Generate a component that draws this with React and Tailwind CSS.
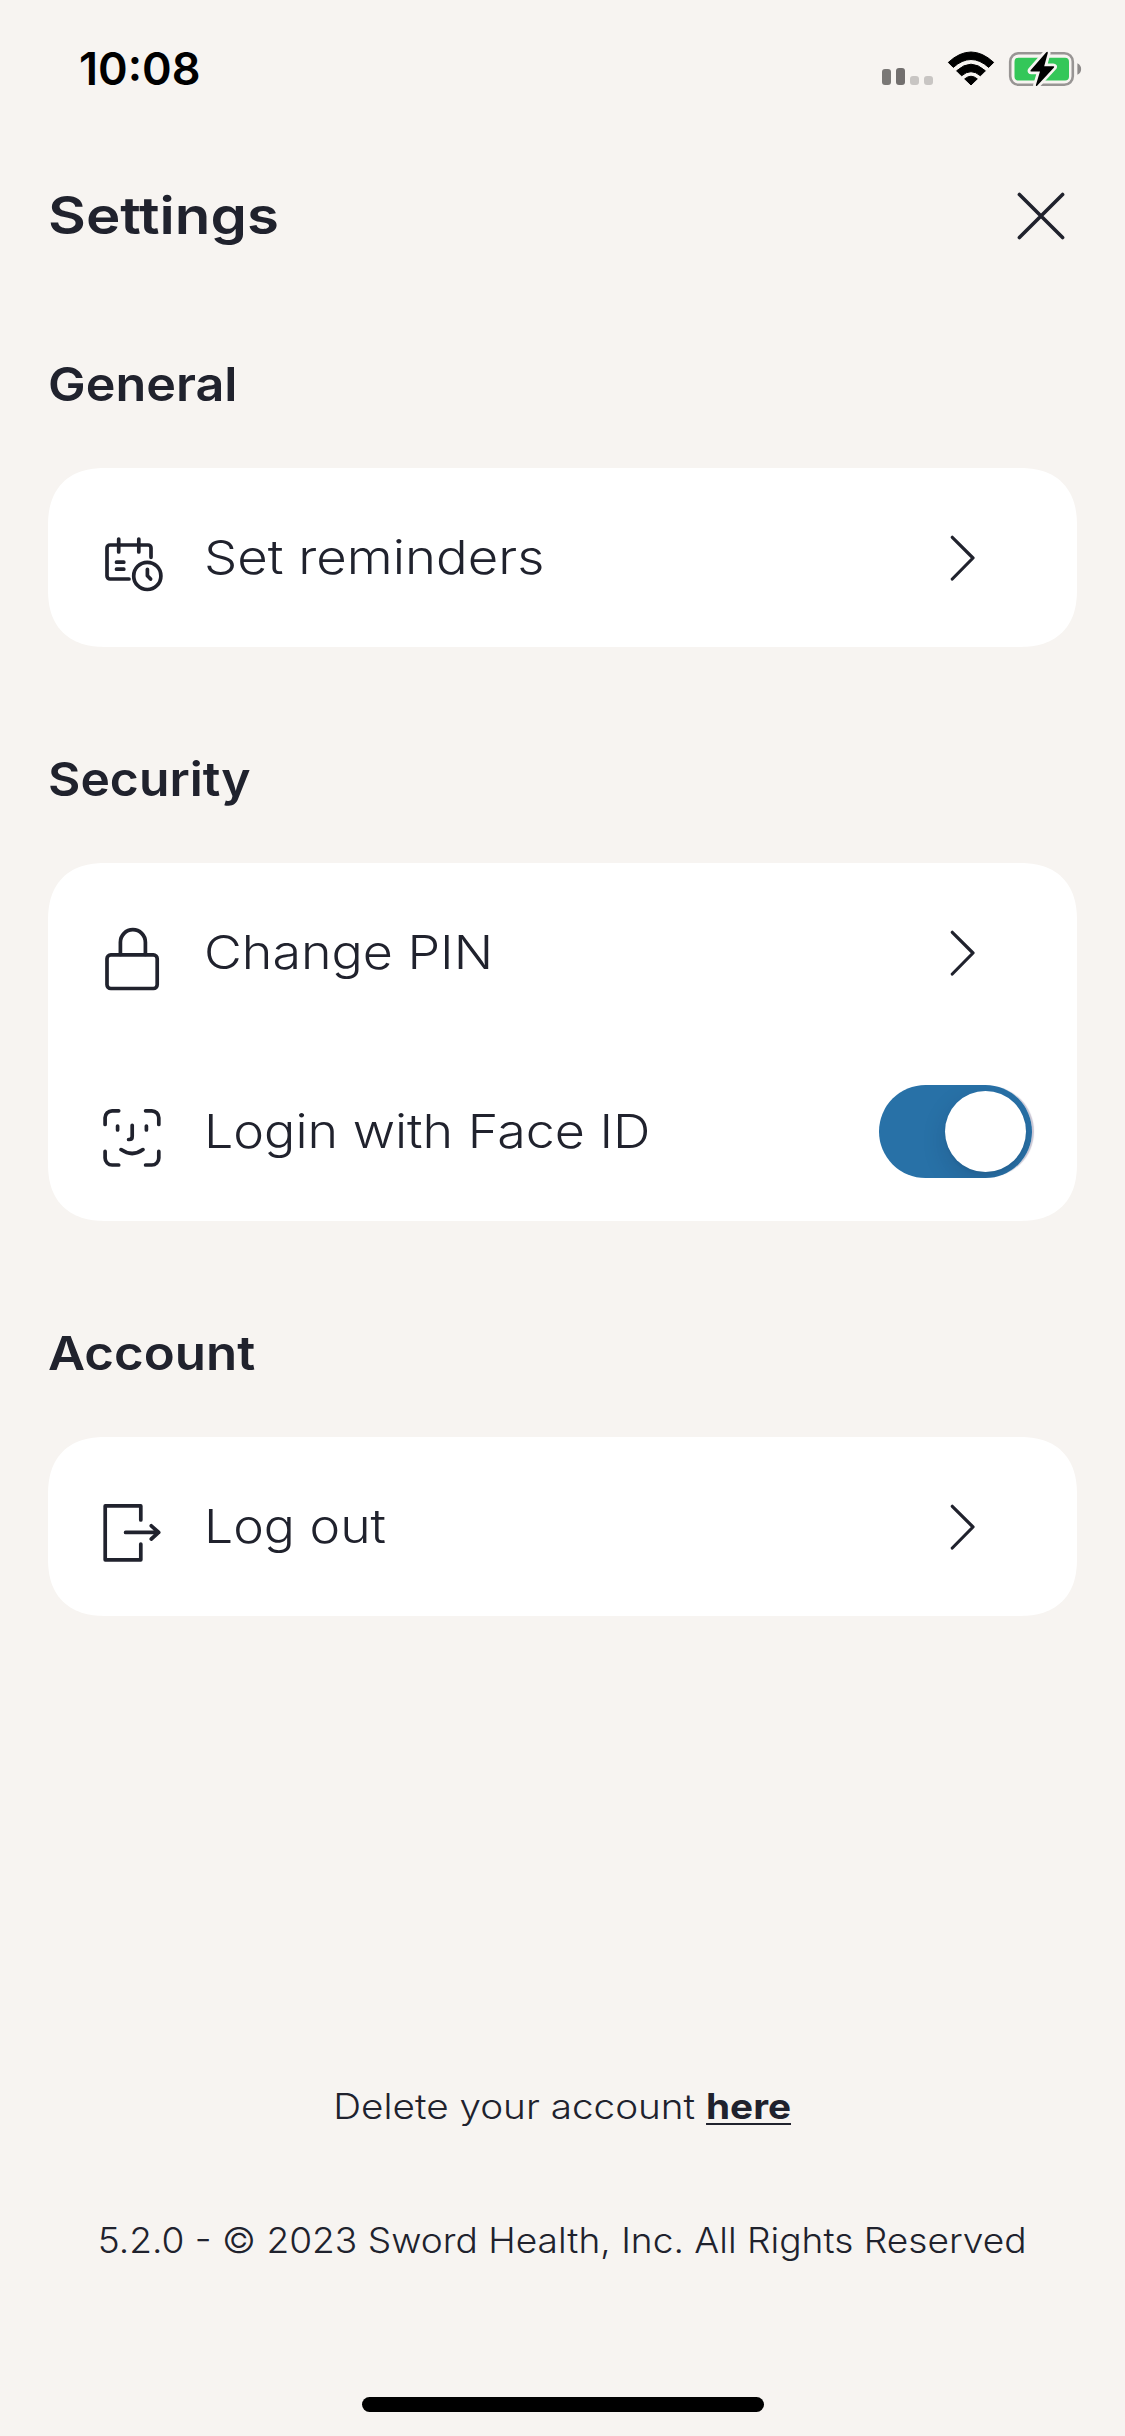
function Icon({ children }) {
  return (
    <svg
      viewBox="0 0 66 66"
      className="mt-[13px] size-[66px] shrink-0"
      fill="none"
      stroke="currentColor"
      strokeWidth="3.7"
      strokeLinecap="round"
      strokeLinejoin="round"
    >
      {children}
    </svg>
  );
}

function RemindersIcon() {
  return (
    <Icon>
      <path d="M52 26.3V17a3 3 0 0 0-3-3H11a3 3 0 0 0-3 3v28a3 3 0 0 0 3 3h19" />
      <path d="M19.7 8v13M39.8 8v13M17.5 31.2h7.3M17.5 38.2h7.3" />
      <circle cx="48.3" cy="44.9" r="13.6" />
      <path d="M48.4 38.3v6.4l3.2 3.4" />
    </Icon>
  );
}

function LockIcon() {
  return (
    <Icon>
      <rect x="8" y="28.9" width="50.2" height="33.6" rx="3.8" />
      <path d="M21.4 28.5V16.2a12.5 12.5 0 0 1 25 0v12.3" />
    </Icon>
  );
}

function FaceIcon() {
  return (
    <Icon>
      <path d="M6.1 19.4v-6.6a7 7 0 0 1 7-7h6.6M46.6 5.8h6.2a7 7 0 0 1 7 7v6.6M59.8 46.4V53a7 7 0 0 1-7 7h-6.2M19.7 60h-6.6a7 7 0 0 1-7-7v-6.6" />
      <path d="M18.6 21v4M47.4 21v4M33.2 20.3v11.2q0 3-3 3h-.6" />
      <path d="M22 44.6q11.2 7.8 22 0" />
    </Icon>
  );
}

function LogoutIcon() {
  return (
    <Icon>
      <path d="M41.8 20V5.9H6.2v53.9h35.6V44" />
      <path d="M26.6 32.4h33M52.3 25.8l7.4 6.6-7.4 6.6" />
    </Icon>
  );
}

function Chevron() {
  return (
    <svg viewBox="0 0 26 46" className="mr-[101px] h-[46px] w-[26px]" fill="none" stroke="currentColor" strokeWidth="3.2" strokeLinecap="round" strokeLinejoin="round">
      <path d="M2.3 2.3L23 23 2.3 44" />
    </svg>
  );
}

function Toggle() {
  return (
    <div className="mr-[45px] rounded-full shadow-[3px_0_1px_-1px_#c9c6d4]">
      <div className="flex h-[93px] w-[153px] items-center justify-end overflow-hidden rounded-full bg-[#2871a7] pr-[6px]">
        <div className="size-[81px] rounded-full bg-white shadow-[0_9px_24px_rgba(20,20,50,0.15),0_2px_3px_rgba(0,0,0,0.06)]" />
      </div>
    </div>
  );
}

function Row({ icon, label, className, children }) {
  return (
    <div className="flex h-[179px] items-center pl-[51px]">
      {icon}
      <div className="mb-[2px] ml-[39px] flex-1 text-[47px] leading-[60px] font-[330] whitespace-nowrap">
        <span className={`inline-block origin-left ${className}`}>{label}</span>
      </div>
      {children}
    </div>
  );
}

function Section({ title, className, children }) {
  return (
    <section>
      <h2 className={`mb-[54px] w-fit origin-left text-[47px] leading-[60px] font-semibold ${className}`}>{title}</h2>
      <div className="rounded-[58px] bg-white [corner-shape:superellipse(1.25)]">{children}</div>
    </section>
  );
}

function StatusBar() {
  return (
    <div className="flex h-[137px] items-center justify-between pr-[42px] pl-[79px] text-black">
      <span className="text-[45px] leading-none font-semibold">10:08</span>
      <svg viewBox="0 0 204 40" className="h-[40px] w-[204px]">
        <rect x="3" y="20" width="9" height="16" rx="3" fill="#7a7876" />
        <rect x="17" y="19" width="9" height="17" rx="3" fill="#726f6e" />
        <rect x="31" y="27" width="9" height="9" rx="3" fill="#c8c5c3" />
        <rect x="45" y="27" width="9" height="9" rx="3" fill="#c8c5c3" />
        <path d="M69.3 13.4Q92 -7.4 114.7 13.4L109.7 18.4Q92 2.6 74.3 18.4Z" stroke="#000" strokeWidth="1" strokeLinejoin="round" />
        <path d="M77.6 21.8Q92 8.6 106.4 21.8L101.4 26.8Q92 18.6 82.6 26.8Z" stroke="#000" strokeWidth="1" strokeLinejoin="round" />
        <path d="M85.7 29.9Q92 24.6 98.3 29.9L92 36Z" stroke="#000" strokeWidth="1" strokeLinejoin="round" />
        <rect x="131.2" y="4.2" width="62.6" height="31.6" rx="8.5" fill="none" stroke="#989594" strokeWidth="2.6" />
        <rect x="135.5" y="8.7" width="54.5" height="22.8" rx="4" fill="#34c759" />
        <path d="M198.4 14.2c5 2.3 5 9.3 0 11.6z" fill="#8d8a89" />
        <path
          d="M167.3 3.2L151.6 21.2q-.8 1.2.8 1.2h8.6l-4.1 13.6q-.2 1.7 1.2.7L175 18.4q.8-1.2-.8-1.2h-9l3.6-13.1q.1-2-1.5-.9z"
          stroke="#f7f4f1"
          strokeWidth="5.5"
          paintOrder="stroke"
          fill="#000"
        />
      </svg>
    </div>
  );
}

export default function App() {
  return (
    <div className="flex h-[2436px] w-[1125px] flex-col bg-[#f7f4f1] font-[Inter,sans-serif] text-[#20222d]">
      <StatusBar />
      <header className="flex h-[158px] items-center justify-between pr-[60px] pl-[48px]">
        <h1 className="origin-left scale-x-[1.12] text-[52px] leading-[60px] font-semibold">Settings</h1>
        <svg viewBox="0 0 48 48" className="size-[48px]" fill="none" stroke="currentColor" strokeWidth="3.6" strokeLinecap="round">
          <path d="M2.4 2.4l43.2 43.2M45.6 2.4L2.4 45.6" />
        </svg>
      </header>
      <main className="flex flex-col gap-[102px] px-[48px] pt-[59px]">
        <Section title="General" className="scale-x-[1.07]">
          <Row icon={<RemindersIcon />} label="Set reminders" className="scale-x-[1.12]">
            <Chevron />
          </Row>
        </Section>
        <Section title="Security" className="scale-x-[1.06]">
          <Row icon={<LockIcon />} label="Change PIN" className="scale-x-[1.105]">
            <Chevron />
          </Row>
          <Row icon={<FaceIcon />} label="Login with Face ID" className="scale-x-[1.105]">
            <Toggle />
          </Row>
        </Section>
        <Section title="Account" className="scale-x-[1.085]">
          <Row icon={<LogoutIcon />} label="Log out" className="scale-x-[1.1]">
            <Chevron />
          </Row>
        </Section>
      </main>
      <footer className="mt-auto flex flex-col items-center pb-[24px] text-[35px] leading-[50px] font-[330] whitespace-nowrap">
        <p className="scale-x-[1.105]">
          Delete your account{' '}
          <a className="font-bold underline decoration-[2px] underline-offset-[4px]">here</a>
        </p>
        <p className="mt-[84px] scale-x-[1.06]">5.2.0 - © 2023 Sword Health, Inc. All Rights Reserved</p>
        <div className="mt-[132px] h-[15px] w-[402px] rounded-full bg-black" />
      </footer>
    </div>
  );
}
